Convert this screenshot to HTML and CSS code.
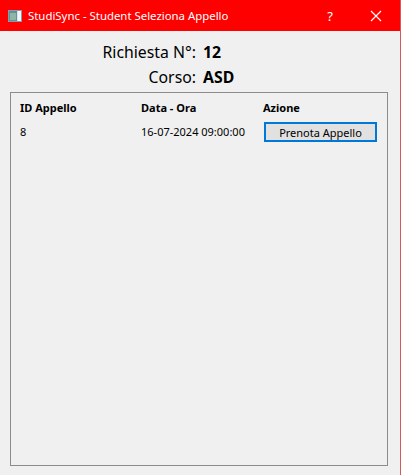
FILE: index.html
```html
<!DOCTYPE html>
<html lang="it">
<head>
<meta charset="utf-8">
<title>StudiSync - Student Seleziona Appello</title>
<link rel="stylesheet" href="styles.css">
</head>
<body>
<div class="window">
  <div class="titlebar">
    <svg class="app-icon" width="14" height="12" viewBox="0 0 14 12">
      <rect x="0.5" y="0.5" width="13" height="11" fill="#dfe6ea" stroke="#8a9aa6"/>
      <rect x="1" y="1" width="8" height="10" fill="#5f8fa8"/>
      <rect x="2" y="3" width="6" height="7" fill="#8fb7a0"/>
      <rect x="10" y="1" width="3" height="10" fill="#f4f6f7"/>
    </svg>
    <span class="title">StudiSync - Student Seleziona Appello</span>
    <span class="help">?</span>
    <svg class="close" width="12" height="12" viewBox="0 0 12 12">
      <path d="M1 1 L11 11 M11 1 L1 11" stroke="#fff" stroke-width="1.1" fill="none"/>
    </svg>
  </div>
  <div class="content">
    <div class="info">
      <span class="label">Richiesta N°:</span><span class="value">12</span>
      <span class="label">Corso:</span><span class="value">ASD</span>
    </div>
    <div class="groupbox">
      <div class="table">
        <span class="th">ID Appello</span><span class="th">Data - Ora</span><span class="th">Azione</span>
        <span class="td">8</span><span class="td">16-07-2024 09:00:00</span><span class="td"><button class="btn">Prenota Appello</button></span>
      </div>
    </div>
  </div>
</div>
</body>
</html>
```
FILE: styles.css
```css
* { box-sizing: border-box; }
html, body { margin: 0; padding: 0; }
body {
  width: 401px;
  height: 475px;
  overflow: hidden;
  background: #f0f0f0;
  font-family: "Noto Sans", "Open Sans", sans-serif;
}
.window {
  width: 401px;
  height: 475px;
  display: flex;
  flex-direction: column;
  border-right: 1px solid #d25a5a;
}
.titlebar {
  height: 31px;
  background: #ff0000;
  display: flex;
  align-items: center;
  padding-left: 8px;
  color: #fff;
  flex: none;
}
.app-icon { flex: none; }
.title {
  margin-left: 6px;
  font-size: 11.4px;
  flex: 1;
}
.help {
  font-size: 13px;
  width: 20px;
  text-align: center;
  margin-right: 30px;
}
.close { margin-right: 18px; flex: none; }
.content {
  flex: 1;
  display: flex;
  flex-direction: column;
}
.info {
  display: grid;
  grid-template-columns: 196px auto;
  column-gap: 7px;
  padding-top: 9px;
  font-size: 15.8px;
  line-height: 25px;
  color: #000;
}
.label { justify-self: end; }
.value { font-weight: bold; }
.groupbox {
  margin: 2px 0 0 10px;
  width: 378px;
  height: 374px;
  border: 1px solid #8c8c8c;
  padding: 6px 0 0 9px;
}
.table {
  display: grid;
  grid-template-columns: 121px 122px 113px;
  row-gap: 5px;
  font-size: 11px;
  line-height: 18px;
  align-items: center;
}
.th { font-weight: bold; }
.td { line-height: 20px; }
.btn {
  display: block;
  width: 113px;
  height: 20px;
  margin-left: 1px;
  padding: 0;
  background: #e1e1e1;
  border: 2px solid #0078d7;
  font-family: inherit;
  font-size: 11px;
  color: #000;
}
```
